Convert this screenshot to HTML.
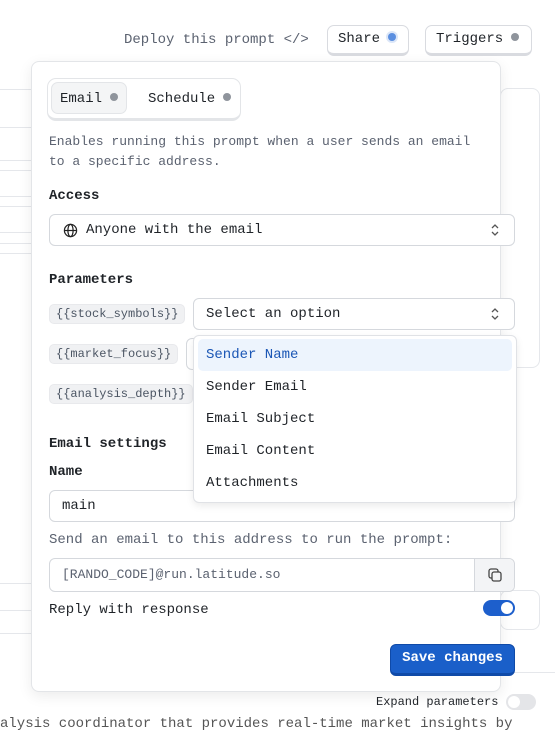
<!DOCTYPE html>
<html><head><style>
*{box-sizing:border-box;margin:0;padding:0}
body{width:555px;height:725px;overflow:hidden;background:#fff;font-family:"Liberation Mono",monospace;font-size:13px;color:#1f2328;position:relative}
.a{position:absolute;white-space:nowrap}
.hl{position:absolute;left:0;width:40px;height:1px;background:#e5e7eb}
.btn{position:absolute;border:1px solid #d9dbe0;border-bottom-width:3px;border-radius:7px;background:#fff;height:31px;padding:5px 10px;font-size:14px;white-space:nowrap}
.dot{display:inline-block;width:8px;height:8px;border-radius:50%;background:#8f949c;margin-left:8px;vertical-align:1px}
.inp{position:absolute;border:1px solid #d5d8dd;border-radius:6px;background:#fff;height:32px;padding:7px 12px;font-size:14px;white-space:nowrap}
.tag{position:absolute;background:#f0f1f3;border-radius:5px;color:#4b5563;font-size:12px;padding:2px 6px;height:20px;border:1px solid #e8e9ec;white-space:nowrap}
.lbl{position:absolute;font-weight:bold;font-size:14px}
.chev{position:absolute;right:14px;top:8px}
</style></head><body>
<div class="hl" style="top:89px"></div><div class="hl" style="top:127px"></div><div class="hl" style="top:160px"></div><div class="hl" style="top:170px"></div><div class="hl" style="top:196px"></div><div class="hl" style="top:206px"></div><div class="hl" style="top:232px"></div><div class="hl" style="top:243px"></div><div class="hl" style="top:253px"></div><div class="hl" style="top:583px"></div><div class="hl" style="top:610px"></div><div class="hl" style="top:633px"></div>
<div class="a" style="left:500px;top:88px;width:40px;height:280px;border:1px solid #e5e7eb;border-radius:8px"></div>
<div class="a" style="left:500px;top:590px;width:40px;height:40px;border:1px solid #e5e7eb;border-radius:8px"></div>
<div class="a" style="left:500px;top:672px;width:55px;height:1px;background:#e5e7eb"></div>

<div class="a" style="left:124px;top:32px;color:#5b6270;font-size:14px">Deploy this prompt &lt;/&gt;</div>
<div class="btn" style="left:327px;top:25px;width:82px">Share<span class="dot" style="background:#5b8fe0;box-shadow:0 0 0 2px #dbe6f8"></span></div>
<div class="btn" style="left:425px;top:25px;width:107px">Triggers<span class="dot"></span></div>

<div class="a" style="left:31px;top:61px;width:470px;height:631px;border:1px solid #e3e5e8;border-radius:8px;background:#fff;box-shadow:0 4px 14px rgba(0,0,0,.08)"></div>
<div class="a" style="left:47px;top:78px;width:194px;height:43px;border:1px solid #e3e5e8;border-bottom-width:3px;border-radius:9px;background:#fff"></div>
<div class="a" style="left:51px;top:82px;width:76px;height:32px;border:1px solid #e3e5e8;border-radius:7px;background:#f4f5f6"></div>
<div class="a" style="left:60px;top:91px;font-size:14px">Email<span class="dot"></span></div>
<div class="a" style="left:148px;top:91px;font-size:14px">Schedule<span class="dot"></span></div>

<div class="a" style="left:49px;top:132px;color:#5b6270;line-height:20px">Enables running this prompt when a user sends an email<br>to a specific address.</div>
<div class="lbl" style="left:49px;top:188px">Access</div>
<div class="inp" style="left:49px;top:214px;width:466px;height:32px;padding-left:36px">Anyone with the email
<svg class="a" style="left:13px;top:8px" width="15" height="15" viewBox="0 0 16 16" fill="none" stroke="#222" stroke-width="1.3"><circle cx="8" cy="8" r="6.5"/><ellipse cx="8" cy="8" rx="2.8" ry="6.5"/><path d="M1.5 8h13"/></svg>
<svg class="chev" width="10" height="14" viewBox="0 0 10 14" fill="none" stroke="#555" stroke-width="1.3"><path d="M2 5l3-3 3 3M2 9l3 3 3-3"/></svg></div>

<div class="lbl" style="left:49px;top:272px">Parameters</div>
<div class="tag" style="left:49px;top:304px">{{stock_symbols}}</div>
<div class="inp" style="left:193px;top:298px;width:322px">Select an option<svg class="chev" width="10" height="14" viewBox="0 0 10 14" fill="none" stroke="#555" stroke-width="1.3"><path d="M2 5l3-3 3 3M2 9l3 3 3-3"/></svg></div>
<div class="tag" style="left:49px;top:344px">{{market_focus}}</div>
<div class="a" style="left:186px;top:338px;width:20px;height:32px;border:1px solid #d5d8dd;border-radius:6px"></div>
<div class="tag" style="left:49px;top:384px">{{analysis_depth}}</div>

<div class="lbl" style="left:49px;top:436px">Email settings</div>
<div class="lbl" style="left:49px;top:464px">Name</div>
<div class="inp" style="left:49px;top:490px;width:466px">main</div>
<div class="a" style="left:49px;top:532px;color:#5b6270;font-size:14px">Send an email to this address to run the prompt:</div>
<div class="inp" style="left:49px;top:558px;width:466px;height:34px;color:#5b6270;font-size:13px;padding-top:8px">[RANDO_CODE]@run.latitude.so
<div class="a" style="right:0;top:0;width:40px;height:32px;background:#f3f4f6;border-left:1px solid #d5d8dd;border-radius:0 6px 6px 0"><svg class="a" style="left:12px;top:8px" width="16" height="16" viewBox="0 0 16 16" fill="none" stroke="#444" stroke-width="1.3"><rect x="5" y="5" width="9" height="9" rx="2"/><path d="M11 5V4a2 2 0 0 0-2-2H4a2 2 0 0 0-2 2v5a2 2 0 0 0 2 2h1"/></svg></div></div>
<div class="a" style="left:49px;top:602px;font-size:14px">Reply with response</div>
<div class="a" style="left:483px;top:600px;width:32px;height:16px;border-radius:8px;background:#1d5fcc"><div class="a" style="right:2px;top:2px;width:12px;height:12px;border-radius:50%;background:#fff"></div></div>
<div class="a" style="left:390px;top:644px;width:125px;height:32px;background:#1a5fc9;border:1px solid #0f4aa8;border-bottom-width:3px;border-radius:6px;color:#fff;font-weight:bold;font-size:14px;text-align:center;padding-top:5px">Save changes</div>

<div class="a" style="left:193px;top:335px;width:324px;height:168px;border:1px solid #e0e2e6;border-radius:6px;background:#fff;box-shadow:0 3px 8px rgba(0,0,0,.08)"></div>
<div class="a" style="left:198px;top:339px;width:314px;height:32px;background:#edf4fd;border-radius:5px"></div>
<div class="a" style="left:206px;top:347px;font-size:14px;color:#1a56b5">Sender Name</div>
<div class="a" style="left:206px;top:379px;font-size:14px">Sender Email</div>
<div class="a" style="left:206px;top:411px;font-size:14px">Email Subject</div>
<div class="a" style="left:206px;top:443px;font-size:14px">Email Content</div>
<div class="a" style="left:206px;top:475px;font-size:14px">Attachments</div>

<div class="a" style="left:376px;top:695px;font-size:12px">Expand parameters</div>
<div class="a" style="left:506px;top:694px;width:30px;height:16px;border-radius:8px;background:#e4e5e8"><div class="a" style="left:2px;top:2px;width:12px;height:12px;border-radius:50%;background:#fff"></div></div>
<div class="a" style="left:0;top:716px;color:#555;font-size:14px">alysis coordinator that provides real-time market insights by</div>
</body></html>
